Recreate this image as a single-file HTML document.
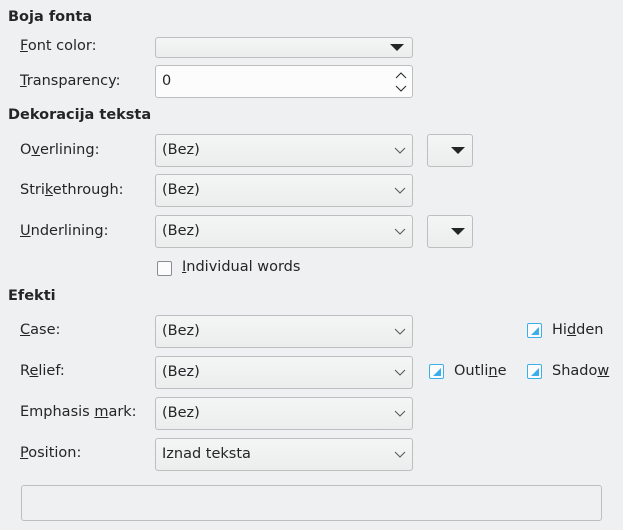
<!DOCTYPE html>
<html><head><meta charset="utf-8"><style>
body{margin:0;width:623px;height:530px;background:#eff0f1;font-family:"DejaVu Sans","Liberation Sans",sans-serif;font-size:14.5px;color:#232627;position:relative;overflow:hidden}
.a{position:absolute;white-space:nowrap}
.h{font-weight:bold}
.lbl{left:20px}
.combo{position:absolute;left:155px;width:256px;height:31px;border:1px solid #bcbebf;border-radius:3px;background:linear-gradient(#f4f5f5,#eceded)}
.combo span{position:absolute;left:6px;top:7px}
.chev{position:absolute;right:6px;top:12px;width:12px;height:8px}
.btn{position:absolute;left:427px;width:44px;height:31px;border:1px solid #bcbebf;border-radius:3px;background:linear-gradient(#f4f5f5,#eceded)}
.tri{position:absolute;width:0;height:0;border-left:7px solid transparent;border-right:7px solid transparent;border-top:7px solid #232627}
.cb{position:absolute;width:13px;height:13px;border:1.5px solid #3daee9;border-radius:2px;background:#fcfcfc}
.cb::after{content:"";position:absolute;right:2px;bottom:2px;width:0;height:0;border-left:8px solid transparent;border-bottom:8px solid #3daee9}
u{text-decoration:underline}
</style></head><body>
<div class="a h" style="left:8px;top:9px">Boja fonta</div>
<div class="a lbl" style="top:38px"><u>F</u>ont color:</div>
<div style="position:absolute;left:155px;top:37px;width:256px;height:19px;border:1px solid #bcbebf;border-radius:3px;background:linear-gradient(#f4f5f5,#eceded)"><div class="tri" style="right:8px;top:6px"></div></div>
<div class="a lbl" style="top:73px"><u>T</u>ransparency:</div>
<div style="position:absolute;left:155px;top:65px;width:256px;height:31px;border:1px solid #bcbebf;border-radius:3px;background:#fcfcfc">
<span class="a" style="left:6px;top:7px">0</span>
<svg class="a" style="right:5px;top:5px" width="12" height="22"><path d="M1 7 L6 2 L11 7 M1 15 L6 20 L11 15" stroke="#232627" fill="none" stroke-width="1"/></svg></div>

<div class="a h" style="left:8px;top:107px">Dekoracija teksta</div>
<div class="a lbl" style="top:142px">O<u>v</u>erlining:</div>
<div class="combo" style="top:134px"><span>(Bez)</span><svg class="chev"><path d="M1 1 L6 6 L11 1" stroke="#555" fill="none"/></svg></div>
<div class="btn" style="top:134px"><div class="tri" style="left:23px;top:12px"></div></div>
<div class="a lbl" style="top:182px">Stri<u>k</u>ethrough:</div>
<div class="combo" style="top:174px"><span>(Bez)</span><svg class="chev"><path d="M1 1 L6 6 L11 1" stroke="#555" fill="none"/></svg></div>
<div class="a lbl" style="top:223px"><u>U</u>nderlining:</div>
<div class="combo" style="top:215px"><span>(Bez)</span><svg class="chev"><path d="M1 1 L6 6 L11 1" stroke="#555" fill="none"/></svg></div>
<div class="btn" style="top:215px"><div class="tri" style="left:23px;top:12px"></div></div>
<div style="position:absolute;left:157px;top:261px;width:13px;height:13px;border:1px solid #8a8c8e;border-radius:2px;background:#fcfcfc"></div>
<div class="a" style="left:182px;top:259px"><u>I</u>ndividual words</div>

<div class="a h" style="left:8px;top:288px">Efekti</div>
<div class="a lbl" style="top:322px"><u>C</u>ase:</div>
<div class="combo" style="top:315px"><span>(Bez)</span><svg class="chev"><path d="M1 1 L6 6 L11 1" stroke="#555" fill="none"/></svg></div>
<div class="a lbl" style="top:363px">R<u>e</u>lief:</div>
<div class="combo" style="top:356px"><span>(Bez)</span><svg class="chev"><path d="M1 1 L6 6 L11 1" stroke="#555" fill="none"/></svg></div>
<div class="a lbl" style="top:404px">Emphasis <u>m</u>ark:</div>
<div class="combo" style="top:397px"><span>(Bez)</span><svg class="chev"><path d="M1 1 L6 6 L11 1" stroke="#555" fill="none"/></svg></div>
<div class="a lbl" style="top:445px"><u>P</u>osition:</div>
<div class="combo" style="top:438px"><span>Iznad teksta</span><svg class="chev"><path d="M1 1 L6 6 L11 1" stroke="#555" fill="none"/></svg></div>

<div class="cb" style="left:527px;top:323px"></div>
<div class="a" style="left:552px;top:322px">Hi<u>d</u>den</div>
<div class="cb" style="left:429px;top:364px"></div>
<div class="a" style="left:454px;top:363px">Outli<u>n</u>e</div>
<div class="cb" style="left:527px;top:364px"></div>
<div class="a" style="left:552px;top:363px">Shado<u>w</u></div>

<div style="position:absolute;left:21px;top:485px;width:579px;height:34px;border:1px solid #bcbebf;border-radius:3px;background:#eff0f1"></div>
</body></html>
